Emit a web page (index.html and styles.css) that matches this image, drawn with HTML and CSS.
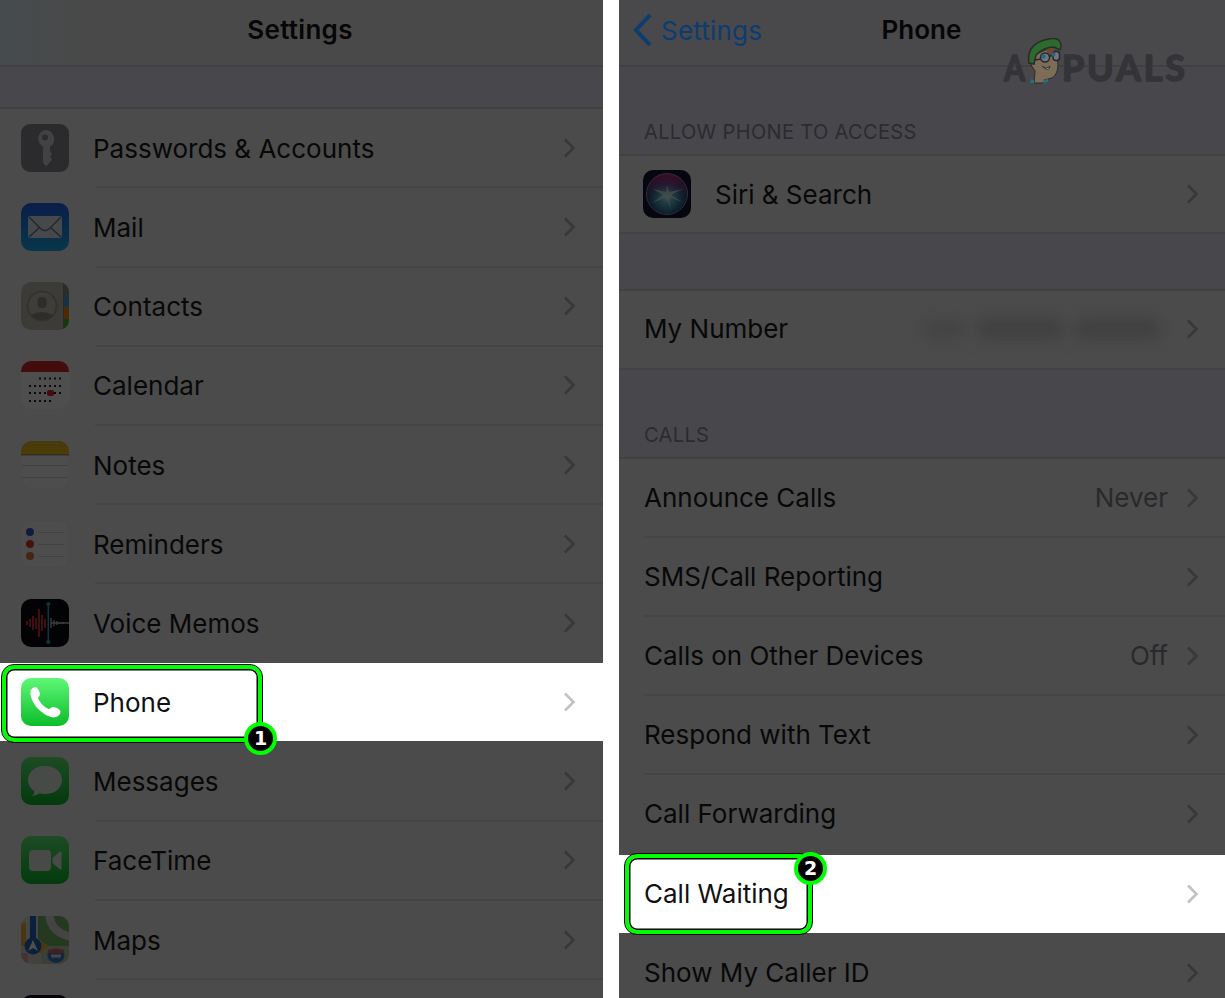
FILE: index.html
```html
<!DOCTYPE html>
<html lang="en">
<head>
<meta charset="utf-8">
<title>Settings – Phone</title>
<link rel="stylesheet" href="styles.css">
</head>
<body>
<svg width="0" height="0" class="defs">
  <defs>
    <symbol id="chev" viewBox="0 0 14 22"><path d="M3 2.500 11.500 11 3 19.500" fill="none" stroke="currentColor" stroke-width="2.600"/></symbol>
    <linearGradient id="gBlue" x2="0" y2="1"><stop offset="0" stop-color="#1d62f0"/><stop offset="1" stop-color="#19b4f5"/></linearGradient>
    <linearGradient id="gGreen" x2="0" y2="1"><stop offset="0" stop-color="#5ff777"/><stop offset="1" stop-color="#0bbd29"/></linearGradient>
    <linearGradient id="gYellow" x2="0" y2="1"><stop offset="0" stop-color="#e8c12c"/><stop offset="1" stop-color="#f6c711"/></linearGradient>
    <radialGradient id="gSiri" cx=".5" cy=".58" r=".55"><stop offset="0" stop-color="#fff"/><stop offset=".25" stop-color="#6fc8dc"/><stop offset=".7" stop-color="#2a6e9c"/><stop offset="1" stop-color="#263766"/></radialGradient>
    <linearGradient id="gPink" x2="0" y2="1"><stop offset="0" stop-color="#c0288c"/><stop offset=".55" stop-color="#c0288c" stop-opacity="0"/></linearGradient>
    <clipPath id="round"><rect width="48" height="48" rx="10"/></clipPath>
  </defs>
</svg>
<main class="screens">
  <section class="panel panel-left">
    <header class="bar bar-left"><h1>Settings</h1></header>
    <div class="band band-top"></div>
    <div class="row"><svg class="icon" viewBox="0 0 48 48"><rect width="48" height="48" rx="9" fill="#8e8e93"/><path fill="#dadade" fill-rule="evenodd" d="M24 6a9 9 0 0 1 5 16.500V27l2 3-2 2.500 2 3-2 2.500-3.500 4-3.500-3V22.500A9 9 0 0 1 24 6Zm0 4.500a3 3 0 1 0 .01 6 3 3 0 0 0 0-6Z"/></svg><div class="body"><span class="label">Passwords &amp; Accounts</span><svg class="chev"><use href="#chev"/></svg></div></div>
    <div class="row"><svg class="icon" viewBox="0 0 48 48"><rect width="48" height="48" rx="10" fill="url(#gBlue)"/><rect x="7" y="13" width="34" height="22" rx="2" fill="#e8edf2"/><path d="m8 14 12 12q4 3 8 0l12-12M8 34l11-10M40 34 29 24" fill="none" stroke="#59789c" stroke-width="1.300"/></svg><div class="body"><span class="label">Mail</span><svg class="chev"><use href="#chev"/></svg></div></div>
    <div class="row"><svg class="icon" viewBox="0 0 48 48"><g clip-path="url(#round)"><path fill="#c9c3b6" d="M0 0h48v48H0z"/><path fill="#8c9292" d="M43 0h5v15h-5z"/><path fill="#3ba7d8" d="M43 15h5v10h-5z"/><path fill="#f18a18" d="M43 25h5v12h-5z"/><path fill="#48b82f" d="M43 37h5v11h-5z"/><path stroke="#8d887e" d="M42.500 0v48"/><circle cx="21" cy="24" r="14.500" fill="#cfc9bc" stroke="#aaa599" stroke-width="2"/><rect x="16.500" y="15" width="9" height="11" rx="4" fill="#989489"/><path fill="#989489" d="M10 33q11-6 22 0-4 5-11 5t-11-5Z"/></g></svg><div class="body"><span class="label">Contacts</span><svg class="chev"><use href="#chev"/></svg></div></div>
    <div class="row"><svg class="icon" viewBox="0 0 48 48"><g clip-path="url(#round)"><path fill="#fff" d="M0 0h48v48H0z"/><path fill="#e02c2c" d="M0 0h48v11H0z"/></g><g stroke="#222" stroke-width="2" stroke-dasharray="2 3"><path d="M18 17.500h22M8 25h32M8 32h32M8 40h22"/></g><rect x="26" y="29" width="7" height="6" rx="2" fill="#d8283c"/></svg><div class="body"><span class="label">Calendar</span><svg class="chev"><use href="#chev"/></svg></div></div>
    <div class="row"><svg class="icon" viewBox="0 0 48 48"><rect x=".5" y=".5" width="47" height="47" rx="10" fill="#fcfcfc" stroke="#f2f2f2"/><g clip-path="url(#round)"><path fill="url(#gYellow)" d="M0 0h48v13H0z"/><path fill="#a8976b" d="M0 13h48v1.500H0z"/></g><path stroke="#d6d6d6" d="M1 24.500h46M1 36.500h46"/></svg><div class="body"><span class="label">Notes</span><svg class="chev"><use href="#chev"/></svg></div></div>
    <div class="row"><svg class="icon" viewBox="0 0 48 48"><rect x=".5" y=".5" width="47" height="47" rx="10" fill="#fdfdfd" stroke="#f1f1f1"/><circle cx="9" cy="12" r="4" fill="#3558d8"/><circle cx="9" cy="24" r="4" fill="#dd3b38"/><circle cx="9" cy="36" r="4" fill="#e17b35"/><path stroke="#d8d8d8" d="M17 12.500h26M17 24.500h26M17 36.500h26"/></svg><div class="body"><span class="label">Reminders</span><svg class="chev"><use href="#chev"/></svg></div></div>
    <div class="row"><svg class="icon" viewBox="0 0 48 48"><rect width="48" height="48" rx="10" fill="#090a12"/><path d="M6 22v4M9 20v8M12 17v14M15 19v11M18 10v28M21 16v16M24 20v9" stroke="#e53b37" stroke-width="1.800"/><path d="M30 19v10M33 21v6M36 22v4M39 23v2M42 23v2M30 24h18" stroke="#c6cbd1" stroke-width="1.300"/><path d="M27.300 4v40" stroke="#37aabe" stroke-width="1.500"/><circle cx="27.300" cy="5" r="2" fill="#37aabe"/><circle cx="27.300" cy="43" r="2" fill="#37aabe"/></svg><div class="body last"><span class="label">Voice Memos</span><svg class="chev"><use href="#chev"/></svg></div></div>
    <div class="row lit"><svg class="icon" viewBox="0 0 48 48"><rect width="48" height="48" rx="10" fill="url(#gGreen)"/><path fill="#fff" d="M9.500 13c1-2.500 3-4 5-4 2.200.4 4 4.300 4.500 7 .2 1.800-2.200 2.800-2 4.300 2 4.700 5.700 8.400 10.500 10.700 1.700.2 2.700-2.200 4.500-2 2.800.2 6.800 2 7.500 4.400.1 2.600-2 5-5.500 5.900-4 .8-11-2.500-16.500-8S8.700 18 9.500 13Z"/></svg><div class="body last"><span class="label">Phone</span><svg class="chev"><use href="#chev"/></svg></div><div class="callout callout-1"><b class="num">1</b></div></div>
    <div class="row"><svg class="icon" viewBox="0 0 48 48"><rect width="48" height="48" rx="10" fill="url(#gGreen)"/><path fill="#edf3ed" d="M24 9c10 0 17 6 17 14S34 37 24 37c-2 0-4-.2-6-.8-1.500 1.500-4 2.600-7 2.500 1.500-1 2.300-2.500 2.300-4.500C9.500 31.500 7 27.500 7 23 7 15 14 9 24 9Z"/></svg><div class="body"><span class="label">Messages</span><svg class="chev"><use href="#chev"/></svg></div></div>
    <div class="row"><svg class="icon" viewBox="0 0 48 48"><rect width="48" height="48" rx="10" fill="url(#gGreen)"/><rect x="8" y="14" width="22" height="21" rx="4" fill="#edf3ed"/><path fill="#edf3ed" d="m31.500 22 7-6q2-1.300 2 1v15q0 2.300-2 1l-7-6Z"/></svg><div class="body"><span class="label">FaceTime</span><svg class="chev"><use href="#chev"/></svg></div></div>
    <div class="row"><svg class="icon" viewBox="0 0 48 48"><g clip-path="url(#round)"><path fill="#dcd9d2" d="M0 0h48v48H0z"/><path fill="#e9b63c" d="M0 7h5v23H0zM21 23l9 7v7H17z"/><path fill="#e3a8a3" d="M0 37h7v11H0z"/><path fill="#79b86a" d="M17 0h31v30H28l-11-7Z"/><path fill="none" stroke="#e0e0da" stroke-width="8" d="M28-2q2 20 24 23"/><path fill="#c3d2b0" d="M28 30h20v18H20V36Z"/><path fill="#e7e7e7" d="M5 0h3v30H5zM15 0h2v30h-2z"/><path stroke="#2069c9" stroke-width="6" d="M12 0v27"/><circle cx="12" cy="30" r="8.500" fill="#2265bd"/><path fill="#fff" d="m12 24 5 11-5-3-5 3Z"/><path fill="#377bd1" d="M27 36q8-4 16 0c2 8-3 10-8 11-5-1-10-3-8-11Z"/><path fill="#e26a72" d="M27 34q8-3 16 0v3H27z"/><path stroke="#e9e9ef" stroke-width="3" d="M30 40h10"/></g></svg><div class="body"><span class="label">Maps</span><svg class="chev"><use href="#chev"/></svg></div></div>
    <div class="row"><svg class="icon" viewBox="0 0 48 48"><rect width="48" height="48" rx="10" fill="#140a1c"/></svg><div class="body"></div></div>
  </section>

  <section class="panel panel-right">
    <header class="bar bar-right">
      <a class="back"><svg viewBox="0 0 20 34"><path d="M17 2 3 17l14 15" fill="none" stroke="currentColor" stroke-width="4"/></svg><span>Settings</span></a>
      <h1>Phone</h1>
      <svg class="brand" viewBox="0 0 190 50">
        <g class="brand-text"><text x="4" y="42.500" textLength="21" lengthAdjust="spacingAndGlyphs">A</text><text x="62" y="42.500" textLength="123" lengthAdjust="spacing">PUALS</text></g>
        <path fill="#7c6c58" stroke="#2b2b2b" d="M34 17 50 10l7 5 1 12q0 9-6 13l-8 2-1 3h-9l1-12-4-6Z"/>
        <path fill="#6c4933" d="m46 11 8-3v8l-6 2z"/>
        <path fill="#2c6a2e" stroke="#292d2a" stroke-width="1.500" d="M29 25Q26 8 44 2q14-4 16 2 2 4 0 8l-6-3q-10 0-18 8l-2 9Z"/>
        <g fill="#707783" stroke="#272829" stroke-width="1.500"><circle cx="45" cy="19.500" r="4.500"/><rect x="53" y="13.500" width="6.500" height="9" rx="3"/></g>
        <path d="m35 22 6-1M49 18.500l4-1.500" stroke="#272829" stroke-width="1.500"/><circle cx="43.500" cy="18.500" r="2.200" fill="#246888"/><circle cx="53.500" cy="16.500" r="2" fill="#246888"/>
        <path fill="#a4a4a4" stroke="#333" d="M42 28q4 4 8 0-1 7-8 0Z"/><path fill="#257081" d="m31 41 3 1v3h-4zM43 42l5-1v3l-5 1z"/>
      </svg>
    </header>
    <div class="band band-access"><h2>ALLOW PHONE TO ACCESS</h2></div>
    <div class="row row-siri"><svg class="icon" viewBox="0 0 48 48"><rect width="48" height="48" rx="10" fill="#101330"/><circle cx="24" cy="24" r="20" fill="url(#gSiri)"/><circle cx="24" cy="24" r="20.500" fill="url(#gPink)" stroke="#9d93ae"/><path fill="#d6fff6" fill-opacity=".75" d="m24 15 2 7 14-3-12 6 11 7-13-5 2 14-4-14-15 6 11-8-10-6 13 3Z"/></svg><div class="body last"><span class="label">Siri &amp; Search</span><svg class="chev"><use href="#chev"/></svg></div></div>
    <div class="band band-gap"></div>
    <div class="row row-number"><div class="body last"><span class="label">My Number</span><span class="masked"><i></i><i></i><i></i></span><svg class="chev"><use href="#chev"/></svg></div></div>
    <div class="band band-calls"><h2>CALLS</h2></div>
    <div class="row"><div class="body"><span class="label">Announce Calls</span><span class="value">Never</span><svg class="chev"><use href="#chev"/></svg></div></div>
    <div class="row"><div class="body"><span class="label">SMS/Call Reporting</span><svg class="chev"><use href="#chev"/></svg></div></div>
    <div class="row"><div class="body"><span class="label">Calls on Other Devices</span><span class="value">Off</span><svg class="chev"><use href="#chev"/></svg></div></div>
    <div class="row"><div class="body"><span class="label">Respond with Text</span><svg class="chev"><use href="#chev"/></svg></div></div>
    <div class="row"><div class="body last"><span class="label">Call Forwarding</span><svg class="chev"><use href="#chev"/></svg></div></div>
    <div class="row lit"><div class="body last"><span class="label">Call Waiting</span><svg class="chev"><use href="#chev"/></svg></div><div class="callout callout-2"><b class="num">2</b></div></div>
    <div class="row"><div class="body last"><span class="label">Show My Caller ID</span><svg class="chev"><use href="#chev"/></svg></div></div>
  </section>
</main>
</body>
</html>
```
FILE: styles.css
```css
* { box-sizing: border-box; }
body { margin: 0; background: #fff; font-family: Inter, "Liberation Sans", sans-serif; overflow: hidden; }
.defs { position: absolute; }
.screens { display: grid; grid-template-columns: 603px 606px; column-gap: 16px; height: 998px; overflow: hidden; }
.panel { background: #4b4b4b; color: #080808; height: 998px; overflow: hidden; }
h1, h2 { margin: 0; }
h1 { font-size: 26px; font-weight: 600; line-height: 32px; color: #060606; letter-spacing: 0.3px; }
h2 { font-size: 20px; font-weight: 400; line-height: 24px; color: #2c2b2f; letter-spacing: 0.35px; }

.bar { height: 67px; border-bottom: 2px solid #414143; }
.bar-left { display: flex; justify-content: center; padding-top: 14px; background: linear-gradient(90deg, #464b4d, #494949 90px); }
.bar-left h1 { padding-right: 3px; }
.bar-right { position: relative; display: grid; grid-template-columns: 1fr auto 1fr; padding: 14px 0 0 14px; background: #49484b; }
.bar-right h1 { padding-right: 15px; letter-spacing: 0; }
.back { display: flex; align-items: center; height: 32px; gap: 8px; color: #0d3c70; font-size: 26px; letter-spacing: 0.2px; }
.back svg { width: 20px; height: 34px; }
.brand { position: absolute; left: 381px; top: 38px; width: 190px; height: 50px; z-index: 1; }
.brand-text { font-family: Lato, sans-serif; font-weight: 700; font-size: 36px; fill: #343338; stroke: #343338; stroke-width: 1.6px; stroke-linejoin: round; }

.band { background: #48474c; border-bottom: 2px solid #414142; }
.band-top { height: 42px; }
.band-access { height: 89px; padding: 53px 0 0 25px; }
.band-gap { height: 59px; border-top: 2px solid #434343; }
.band-calls { height: 90.2px; padding: 53px 0 0 25px; border-top: 2px solid #434343; }

.row { position: relative; display: flex; align-items: center; height: 79.2px; padding-left: 21px; }
.panel-left .row { top: -0.8px; }
.panel-left .label { padding-top: 2px; }
.panel-left .body { height: 80.2px; align-self: flex-start; border-image: linear-gradient(90deg, transparent 4px, #454545 4px) 2; }
.panel-left .body.last { border-image: none; }
.panel-right .row { padding-left: 25px; }
.panel-right .row-siri { height: 76px; padding-left: 24px; }
.row-siri .label { padding-top: 3px; }
.panel-right .row-number { height: 77.4px; }
.icon { width: 48px; height: 48px; margin-right: 24px; flex: none; filter: brightness(0.305); }
.body { display: flex; align-items: center; flex: 1; height: 100%; border-bottom: 2px solid #454545; padding: 1px 27px 0 0; }
.panel-right .body { padding-right: 26px; }
.body.last { border-bottom-color: transparent; }
.label { font-size: 26px; line-height: 32px; margin-right: auto; white-space: nowrap; }
.value { font-size: 26px; line-height: 32px; color: #29292b; margin-right: 17px; }
.chev { width: 14px; height: 22px; color: #38383a; }
.panel .lit { background: linear-gradient(#fff, #fff) 0 0 / 100% 78.4px no-repeat; color: #111; }
.lit .icon { filter: none; }
.lit .chev { color: #c2c2c6; }
.masked { display: flex; gap: 12px; width: 235px; margin-right: 26px; filter: blur(7px); }
.masked i { height: 20px; background: #404040; flex: 2; }
.masked i:first-child { flex: 1; background: #444; }

.callout { position: absolute; border: 4px solid #0f0; border-radius: 12px; outline: 1.5px solid #000; box-shadow: inset 0 0 0 1.5px #000; z-index: 2; }
.callout-1 { left: 2px; top: 2px; width: 260px; height: 77px; }
.callout-2 { left: 6px; top: -0.8px; width: 187px; height: 80px; }
.num { position: absolute; display: flex; align-items: center; justify-content: center; width: 33px; height: 33px; border: 4px solid #0f0; border-radius: 50%; background: #000; color: #fff; font: bold 19px/1 "DejaVu Sans", sans-serif; }
.callout-1 .num { right: -19px; bottom: -17px; }
.callout-2 .num { right: -19px; top: -6px; }
```
